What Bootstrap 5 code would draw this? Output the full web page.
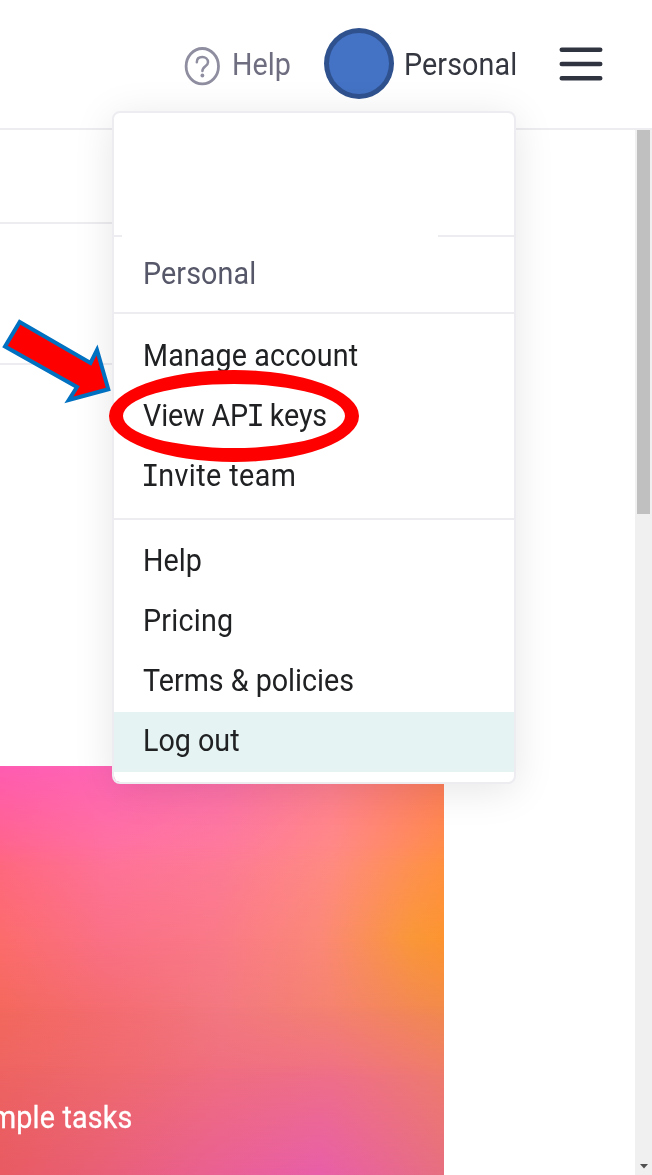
<!DOCTYPE html>
<html lang="en">
<head>
<meta charset="utf-8">
<meta name="viewport" content="width=device-width, initial-scale=1">
<title>Account menu</title>
<link rel="stylesheet" href="https://cdn.jsdelivr.net/npm/bootstrap@5.3.0/dist/css/bootstrap.min.css">
<style>
  body { font-family: Roboto, "Liberation Sans", sans-serif; font-size: 30.5px; line-height: 60px; color: #202123; background: #fff; height: 1175px; overflow: hidden; }
  .fit { display: inline-block; transform: scaleX(.94); transform-origin: 0 50%; white-space: nowrap; }
  .topbar { height: 130px; border-bottom: 2px solid #ececf1; }
  .help-link { width: 140px; margin-left: 184px; color: #6e6e80; }
  .help-link svg { margin: 1px 12px 0 0; }
  .help-link, .who { padding-top: 2px; }
  .avatar { width: 70px; height: 71px; margin-top: -2px; border: 5px solid #2f528f; background: #4472c4; }
  .who { width: 165px; padding-left: 9.5px; color: #353740; }
  .line-a { height: 94px; border-bottom: 2px solid #ececf1; }
  .line-b { height: 141px; border-bottom: 2px solid #ececf1; }
  .left-col { width: 444px; }
  .tile { height: 410px; margin-top: 401px; color: #fff; }
  .tile .band { position: absolute; inset: 0; }
  .b0 { background: linear-gradient(90deg, #ff5cb2, #ff66b6, #fd70ae, #ff7e92, #ff7c60); }
  .b1 { background: linear-gradient(90deg, #ff6784, #ff739c, #fe7b98, #ff8b84, #ff9045); -webkit-mask-image: linear-gradient(transparent 0, #000 100px); }
  .b2 { background: linear-gradient(90deg, #fc6c6c, #fa7086, #fa7988, #fb8878 72%, #fa9738 93%, #fd9430); -webkit-mask-image: linear-gradient(transparent 80px, #000 172px); }
  .b3 { background: linear-gradient(90deg, #f3685c, #f46c70, #f27880, #f4826f, #f28a4c); -webkit-mask-image: linear-gradient(transparent 172px, #000 250px); }
  .b4 { background: linear-gradient(90deg, #ee6462, #ef6a6e, #f06e80, #ef7086, #ef7c6c); -webkit-mask-image: linear-gradient(transparent 240px, #000 310px); }
  .b5 { background: linear-gradient(90deg, #e85a62, #e85f78, #e96092, #e85ea9 72%, #e66e80); -webkit-mask-image: linear-gradient(transparent 300px, #000 410px); }
  .tile-text { margin: 0 0 28px -9px; letter-spacing: .2px; -webkit-text-stroke: .3px #fff; }
  .scroller { width: 17px; background: #f0f0f0; }
  .thumb { width: 13px; height: 384px; background: #c0c0c0; }
  .scroller svg { margin-bottom: 7px; }
  .account-menu { position: absolute; left: 112px; top: 111px; width: 404px; height: 673px; background: #fff; border: 2px solid #ececf1; border-radius: 8px; box-shadow: 0 6px 40px rgba(8,8,8,.1); background-clip: padding-box; }
  .menu-head { height: 122px; }
  .menu-rule { height: 2px; background: #ececf1; }
  .rule-start { width: 8px; }
  .rule-end { width: 76px; }
  .menu-label { height: 75px; line-height: 74px; padding-left: 29px; color: #565869; }
  .menu-group { padding: 12px 0; }
  .menu-group a { display: block; height: 60px; line-height: 60px; padding-left: 29px; color: #202123; text-decoration: none; }
  .menu-group.lower a { line-height: 57px; }
  .menu-group.lower a.active { line-height: 58px; background: #e5f3f2; }
  .ls-0 { letter-spacing: -.12px; }
  .ls-1 { letter-spacing: .13px; }
  .ls-2 { letter-spacing: .25px; }
  .ls-3 { letter-spacing: .45px; }
  .cap-i { font-family: "Liberation Mono", monospace; font-size: 33px; line-height: 1; margin-left: -2px; margin-right: -2px; }
  .ring { position: absolute; left: 109px; top: 370px; width: 250px; height: 92px; border: 14px solid #f00; border-radius: 50%; }
  .pointer { position: absolute; left: 0; top: 310px; }
</style>
</head>
<body class="d-flex flex-column position-relative">
  <header class="topbar d-flex align-items-center flex-shrink-0">
    <a class="help-link d-flex align-items-center text-decoration-none" href="#">
      <svg width="36" height="40" viewBox="0 0 36 40" fill="none" stroke="#8e8ea0">
        <ellipse cx="18.3" cy="20.2" rx="16.2" ry="17.7" stroke-width="2.8"/>
        <path d="M12.8 16.2C12.8 12.6 15.2 11 18.3 11S24 13 24 16.2C24 20.4 18.4 20 18.4 25" stroke-width="2.5" stroke-linecap="round"/>
        <circle cx="18.4" cy="29.5" r="1.9" fill="#8e8ea0" stroke="none"/>
      </svg><span class="fit">Help</span>
    </a>
    <span class="avatar rounded-circle"></span>
    <span class="who"><span class="fit ls-1">Personal</span></span>
    <svg width="44" height="36" viewBox="0 0 44 36" stroke="#2f3440" stroke-width="4.6" stroke-linecap="round"><path d="M2.8 3.8H41.2M2.8 18H41.2M2.8 32.2H41.2"/></svg>
  </header>

  <div class="d-flex flex-grow-1">
    <main class="flex-grow-1">
      <div class="left-col">
        <div class="line-a"></div>
        <div class="line-b"></div>
        <section class="tile position-relative d-flex align-items-end overflow-hidden">
          <div class="band b0"></div><div class="band b1"></div><div class="band b2"></div>
          <div class="band b3"></div><div class="band b4"></div><div class="band b5"></div>
          <p class="tile-text fit position-relative">mple tasks</p>
        </section>
      </div>
    </main>
    <div class="scroller d-flex flex-column justify-content-between align-items-center">
      <div class="thumb"></div>
      <svg width="8" height="5" viewBox="0 0 8 5"><path d="M0 0H8L4 4.5Z" fill="#505050"/></svg>
    </div>
  </div>

  <nav class="account-menu">
    <div class="menu-head"></div>
    <div class="d-flex justify-content-between"><div class="menu-rule rule-start"></div><div class="menu-rule rule-end"></div></div>
    <div class="menu-label"><span class="fit ls-1">Personal</span></div>
    <div class="menu-rule"></div>
    <div class="menu-group">
      <a href="#"><span class="fit ls-1">Manage account</span></a>
      <a href="#"><span class="fit ls-0">View AP<span class="cap-i">I</span> keys</span></a>
      <a href="#"><span class="fit ls-3"><span class="cap-i">I</span>nvite team</span></a>
    </div>
    <div class="menu-rule"></div>
    <div class="menu-group lower">
      <a href="#"><span class="fit">Help</span></a>
      <a href="#"><span class="fit ls-2">Pricing</span></a>
      <a href="#"><span class="fit">Terms &amp; policies</span></a>
      <a href="#" class="active"><span class="fit">Log out</span></a>
    </div>
  </nav>
  <div class="ring"></div>
  <svg class="pointer" width="116" height="100" viewBox="0 310 116 100"><path d="M19.7 322L90.5 363L97 350L108.3 389.3L68.8 400L77 387L5 346.5Z" fill="#f00" stroke="#0070c0" stroke-width="4"/></svg>
<script src="https://cdn.jsdelivr.net/npm/bootstrap@5.3.0/dist/js/bootstrap.bundle.min.js"></script>
</body>
</html>
